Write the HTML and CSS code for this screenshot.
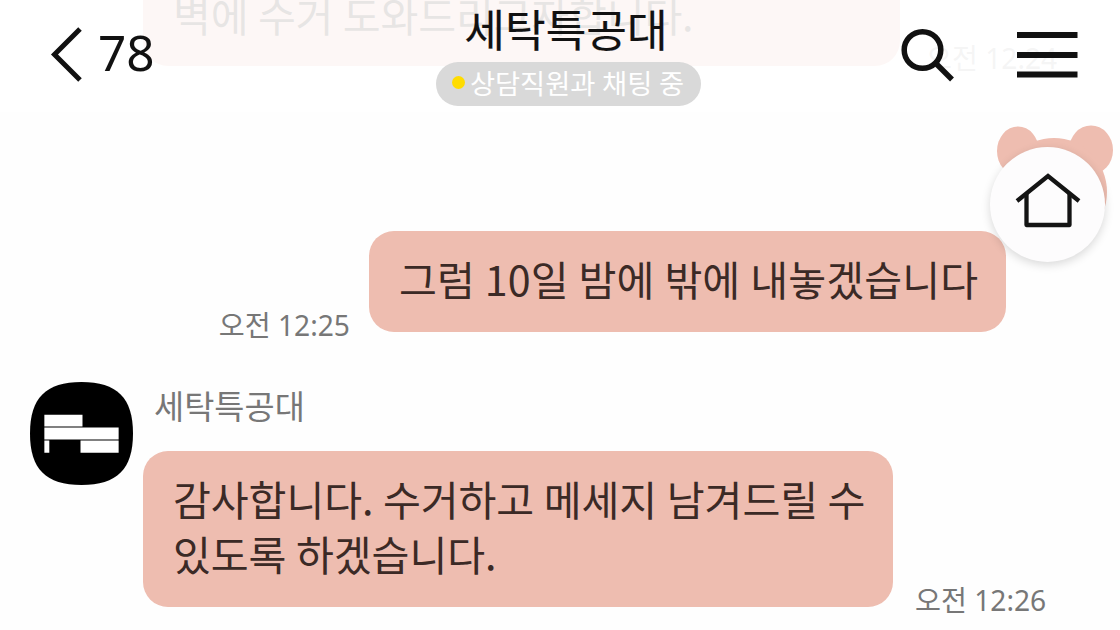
FILE: index.html
```html
<!DOCTYPE html>
<html lang="ko">
  <head>
    <meta charset="utf-8">
    <title>세탁특공대</title>
    <link rel="stylesheet" href="styles.css">
  </head>
  <body>
    <main class="chat">
      <div class="message previous">
        <div class="bubble"><span class="text">벽에 수거 도와드리고자합니다.</span></div>
        <span class="time">오전 12:24</span>
      </div>

      <div class="message mine">
        <span class="time">오전 12:25</span>
        <div class="bubble"><span class="text">그럼 10일 밤에 밖에 내놓겠습니다</span></div>
      </div>

      <div class="message theirs">
        <svg class="avatar" viewBox="0 0 104 104">
          <path d="M52 0C88 0 104 16 104 52S88 104 52 104 0 88 0 52 16 0 52 0Z" fill="#000"/>
          <path d="M14.500 33h38.500v12h-38.500zM14.500 46h75v12h-75zM14.500 59h5v12.500h-5zM51 59h38.500v12.500h-38.500z" fill="#fff"/>
        </svg>
        <div class="content">
          <div class="name">세탁특공대</div>
          <div class="row">
            <div class="bubble"><span class="text">감사합니다. 수거하고 메세지 남겨드릴 수<br>있도록 하겠습니다.</span></div>
            <span class="time">오전 12:26</span>
          </div>
        </div>
      </div>
    </main>

    <svg class="bear" viewBox="0 0 120 120">
      <g fill="#eebdb0">
        <ellipse cx="25" cy="29" rx="21" ry="24.500"/>
        <ellipse cx="98" cy="28" rx="22" ry="24.500"/>
        <ellipse cx="61" cy="70" rx="53" ry="54"/>
      </g>
    </svg>

    <header class="header">
      <a class="back">
        <svg width="34" height="56" viewBox="0 0 34 56">
          <path d="M30 2 4.500 27.500 30 53" fill="none" stroke="#111" stroke-width="5"/>
        </svg>
        <span class="count">78</span>
      </a>
      <div class="center">
        <h1>세탁특공대</h1>
        <div class="status"><i class="dot"></i><span>상담직원과 채팅 중</span></div>
      </div>
      <div class="actions">
        <svg width="54" height="54" viewBox="0 0 54 54" fill="none" stroke="#111">
          <circle cx="21.500" cy="22" r="18.300" stroke-width="5.500"/>
          <path d="M34.500 35 51 51.500" stroke-width="5.500"/>
        </svg>
        <svg width="61" height="46" viewBox="0 0 61 46">
          <path d="M0 0h60.500v6H0zM0 20h60.500v6H0zM0 39.500h60.500v6H0z" fill="#111"/>
        </svg>
      </div>
    </header>

    <button class="home" type="button">
      <svg width="66" height="56" viewBox="0 0 66 56" fill="none" stroke="#141414" stroke-width="4.300">
        <path d="M2 29 33 4 64 29"/>
        <path d="M11.500 22V53H54.500V22" stroke-linejoin="round"/>
      </svg>
    </button>
  </body>
</html>
```
FILE: styles.css
```css
* {
  box-sizing: border-box;
}

body {
  position: relative;
  width: 1120px;
  height: 630px;
  margin: 0;
  overflow: hidden;
  background-color: #fefefe;
  color: #3b2a26;
  font-family: "Noto Sans CJK KR", sans-serif;
}

.chat {
  display: flex;
  flex-direction: column;
}

.message,
.row {
  display: flex;
  align-items: flex-end;
}

.bubble {
  padding: 20px 28px 24px 30px;
  background-color: #eebdb0;
  border-radius: 25px;
  font-size: 41.200px;
  line-height: 55px;
  letter-spacing: -0.1px;
  word-spacing: -1.800px;
  white-space: nowrap;
}

.time {
  color: #777;
  font-family: "Noto Sans", "Noto Sans CJK KR", sans-serif;
  font-size: 28.200px;
  line-height: 32px;
  white-space: nowrap;
}

.previous {
  height: 66px;
  padding-left: 143px;
  gap: 26px;
}

.previous .bubble {
  width: 757px;
  letter-spacing: -0.2px;
}

.previous .time {
  margin-bottom: -8px;
  color: #aaa;
}

.mine {
  margin-top: 165px;
  padding-right: 114px;
  justify-content: flex-end;
  gap: 19px;
}

.mine .bubble {
  width: 637px;
  height: 101px;
  letter-spacing: 0.1px;
}

.mine .time {
  margin-bottom: -9px;
}

.theirs {
  margin-top: 50px;
  padding-left: 30px;
  align-items: flex-start;
  gap: 10px;
}

.avatar {
  width: 103px;
  height: 103px;
}

.name {
  height: 69px;
  padding-left: 11px;
  color: #777;
  font-size: 32.800px;
  line-height: 45px;
}

.row {
  gap: 22px;
}

.row .bubble {
  width: 750px;
  height: 156px;
}

.row .time {
  margin-bottom: -9px;
}

.bear {
  position: absolute;
  left: 993px;
  top: 122px;
  width: 120px;
  height: 120px;
}

.header {
  position: absolute;
  top: 0;
  left: 0;
  display: grid;
  grid-template-columns: 386px 364px 1fr;
  width: 100%;
  height: 112px;
  background-color: rgba(255, 255, 255, 0.88);
  color: #111;
}

.back {
  display: flex;
  align-items: center;
  height: 110px;
  padding-left: 50px;
  gap: 14px;
}

.count {
  padding-bottom: 7px;
  font-family: "Noto Sans", sans-serif;
  font-size: 49.500px;
  line-height: 50px;
}

.center {
  display: flex;
  flex-direction: column;
  align-items: center;
}

h1 {
  height: 62px;
  margin: 0;
  padding-right: 4px;
  font-size: 44.200px;
  font-weight: 400;
  line-height: 56px;
  -webkit-text-stroke: 0.2px;
}

.status {
  display: flex;
  align-items: center;
  justify-content: center;
  width: 265px;
  height: 44px;
  padding-bottom: 4px;
  gap: 5px;
  border-radius: 22px;
  background-color: #d9d9d9;
  color: #fff;
  font-size: 27.300px;
  line-height: 40px;
  word-spacing: -1px;
  white-space: nowrap;
}

.dot {
  width: 13px;
  height: 13px;
  border-radius: 50%;
  background-color: #ffdc00;
}

.actions {
  display: flex;
  align-items: center;
  height: 109px;
  padding-left: 151px;
  gap: 62px;
}

.home {
  position: absolute;
  top: 147px;
  left: 990px;
  display: flex;
  align-items: center;
  justify-content: center;
  width: 115px;
  height: 115px;
  padding: 0 0 10px;
  border: none;
  border-radius: 50%;
  background-color: #fdfcfd;
  box-shadow: 0 3px 10px rgba(0, 0, 0, 0.15);
}
```
